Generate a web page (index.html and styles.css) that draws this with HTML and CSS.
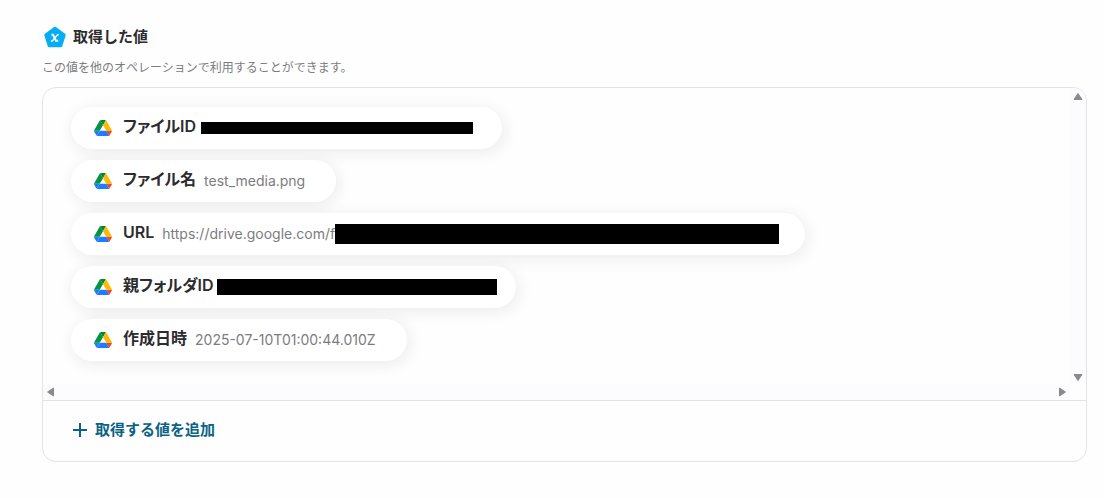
FILE: index.html
```html
<!DOCTYPE html>
<html lang="ja">
<head>
<meta charset="utf-8">
<meta name="viewport" content="width=device-width, initial-scale=1">
<title>取得した値</title>
<link rel="stylesheet" href="styles.css">
</head>
<body>
<svg class="defs" aria-hidden="true">
  <symbol id="drive" viewBox="0 0 87.3 78">
    <path fill="#1f7cff" d="m6.6 66.85 3.85 6.65c.8 1.4 1.95 2.5 3.3 3.3l13.75-23.8h-27.5c0 1.55.4 3.1 1.2 4.5z"/>
    <path fill="#069444" d="m43.65 25-13.75-23.8c-1.35.8-2.5 1.9-3.3 3.3l-25.4 44a9.06 9.06 0 0 0-1.2 4.5h27.5z"/>
    <path fill="#f4472f" d="m73.55 76.8c1.35-.8 2.5-1.9 3.3-3.3l1.6-2.75 7.65-13.25c.8-1.4 1.2-2.95 1.2-4.5h-27.5l5.85 11.5z"/>
    <path fill="#03843c" d="m43.65 25 13.75-23.8c-1.35-.8-2.9-1.2-4.5-1.2h-18.5c-1.6 0-3.15.45-4.5 1.2z"/>
    <path fill="#1f7cff" d="m59.8 53h-32.3l-13.75 23.8c1.35.8 2.9 1.2 4.5 1.2h50.8c1.6 0 3.15-.45 4.5-1.2z"/>
    <path fill="#ffb900" d="m73.4 26.5-12.7-22c-.8-1.4-1.95-2.5-3.3-3.3l-13.75 23.8 16.15 28h27.45c0-1.55-.4-3.1-1.2-4.5z"/>
  </symbol>
</svg>
<main class="page">
  <header class="heading">
    <svg class="heading-icon" viewBox="0 0 24 24" aria-hidden="true">
      <path fill="#06adf5" stroke="#06adf5" stroke-width="3" stroke-linejoin="round" d="M12 3.2 21.2 10 17.8 20.8H6.2L2.8 10z"/>
      <path fill="none" stroke="#fff" stroke-width="1.9" d="M8.500 9.800h1.500l3 6h2.200"/>
      <path fill="none" stroke="#fff" stroke-width="1.4" d="M16 9.600h-1.300L9.300 16H7.900"/>
    </svg>
    <h1 class="title">取得した値</h1>
  </header>
  <p class="description">この値を他のオペレーションで利用することができます。</p>
  <section class="panel">
    <div class="viewport">
      <ul class="values">
        <li class="pill"><svg class="drive"><use href="#drive"/></svg><span class="label">ファイルID</span><span class="mask mask-file"></span></li>
        <li class="pill"><svg class="drive"><use href="#drive"/></svg><span class="label">ファイル名</span><span class="value">test_media.png</span></li>
        <li class="pill"><svg class="drive"><use href="#drive"/></svg><span class="label">URL</span><span class="value">https://drive.google.com/f</span><span class="mask mask-url"></span></li>
        <li class="pill"><svg class="drive"><use href="#drive"/></svg><span class="label">親フォルダID</span><span class="mask mask-folder"></span></li>
        <li class="pill"><svg class="drive"><use href="#drive"/></svg><span class="label">作成日時</span><span class="value">2025-07-10T01:00:44.010Z</span></li>
      </ul>
      <div class="track track-y" aria-hidden="true">
        <svg class="arrow" viewBox="0 0 10 10"><path d="M5 1.500 9 7.500H1z"/></svg>
        <svg class="arrow" viewBox="0 0 10 10"><path d="M5 8.500 9 2.500H1z"/></svg>
      </div>
      <div class="track track-x" aria-hidden="true">
        <svg class="arrow" viewBox="0 0 10 10"><path d="M1.500 5 7.500 1v8z"/></svg>
        <svg class="arrow" viewBox="0 0 10 10"><path d="M8.500 5 2.500 1v8z"/></svg>
      </div>
    </div>
    <footer class="actions">
      <button class="add" type="button">
        <svg class="plus" viewBox="0 0 16 16" aria-hidden="true"><path d="M8 1v14M1 8h14"/></svg>
        取得する値を追加
      </button>
    </footer>
  </section>
</main>
</body>
</html>
```
FILE: styles.css
```css
* { box-sizing: border-box; }
body {
  margin: 0;
  background: #fefefe;
  color: #2c2c2f;
  font-family: Inter, "Noto Sans CJK JP", sans-serif;
}
.defs { display: none; }
.page { padding: 25px 17px 36px 42px; }
.heading { display: flex; align-items: center; gap: 6px; height: 24px; padding-left: 1px; }
.heading-icon { width: 24px; height: 24px; }
.title { margin: 0; font-size: 15px; line-height: 24px; font-weight: 600; }
.description { margin: 8px 0 9px; font-size: 12px; line-height: 21px; color: #7c7c80; }
.panel { border: 1px solid #e4e4e7; border-radius: 14px; overflow: hidden; }
.viewport {
  display: grid;
  grid-template-columns: 1fr 16px;
  grid-template-rows: 1fr 16px;
}
.values {
  display: flex;
  flex-direction: column;
  align-items: flex-start;
  gap: 11px;
  margin: 0;
  padding: 19px 28px 23px;
  list-style: none;
  overflow: hidden;
}
.pill {
  display: flex;
  align-items: center;
  height: 42px;
  padding: 0 31px 0 23px;
  border-radius: 21px;
  background: #fff;
  box-shadow: 2px 3px 16px rgba(40, 30, 60, 0.09);
}
.drive { width: 18px; height: 16px; margin-right: 11px; }
.label {
  padding-bottom: 3px;
  margin-right: 8px;
  font-size: 16px;
  line-height: 23px;
  font-weight: 600;
  font-feature-settings: "palt";
}
.value { font-size: 14px; line-height: 20px; color: #7c7c80; }
.mask { background: #000; }
.mask-file { width: 272px; height: 12px; margin: 0 -2px 0 -3px; }
.mask-url { width: 444px; height: 20px; margin: 0 -5px 0 0; }
.mask-folder { width: 280px; height: 16px; margin: 0 -12px 0 -5px; }
.track { display: flex; justify-content: space-between; align-items: center; background: #fcfbfd; }
.track-y { flex-direction: column; padding: 4px 0 2px; }
.track-x { padding: 0 3px; }
.arrow { width: 10px; height: 10px; fill: #8a8a8c; stroke: #8a8a8c; stroke-linejoin: round; }
.actions { padding: 16px 29px 18px; border-top: 1px solid #e4e4e7; }
.add {
  display: flex;
  align-items: center;
  gap: 7px;
  padding: 0;
  border: 0;
  background: none;
  color: #0b6285;
  font: 600 15px/26px Inter, "Noto Sans CJK JP", sans-serif;
  cursor: pointer;
}
.plus { width: 16px; height: 16px; fill: none; stroke: currentColor; stroke-width: 2; }
```
